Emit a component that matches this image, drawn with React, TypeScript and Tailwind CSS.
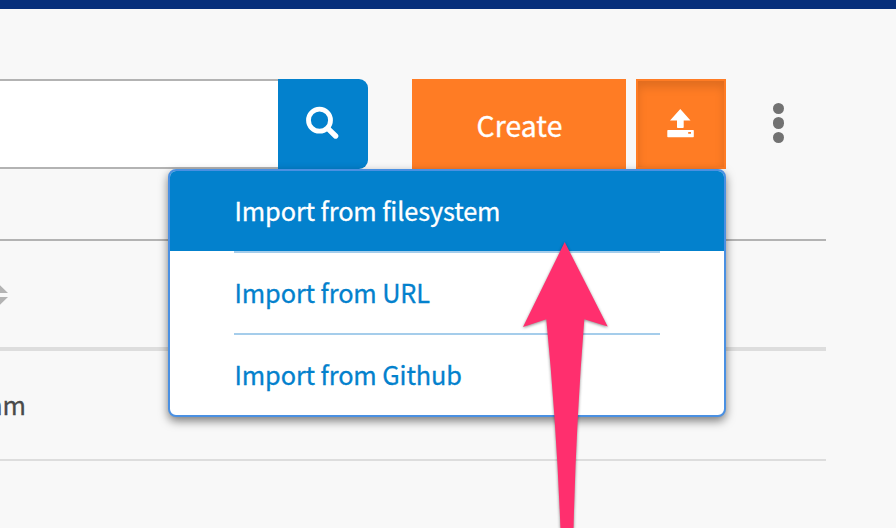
const MENU_ITEMS = ['Import from filesystem', 'Import from URL', 'Import from Github'];

function SearchIcon() {
  return (
    <svg width="34" height="34" viewBox="305 105 34 34" fill="none" stroke="#fff">
      <circle cx="319.5" cy="120.2" r="11" strokeWidth="4.8" />
      <path d="M328 128.6L335.6 136" strokeWidth="5.4" strokeLinecap="round" />
    </svg>
  );
}

function UploadIcon() {
  return (
    <svg width="28" height="30" viewBox="667 108 28 30" fill="#fff">
      <path d="M680.3 109L690.5 120.5H683.7V127.2Q683.7 128 682.9 128H677.8Q677 128 677 127.2V120.5H670Z" />
      <path
        fillRule="evenodd"
        d="M668 130H693.2Q693.8 130 693.8 130.6V136.6Q693.8 137.2 693.2 137.2H668Q667.3 137.2 667.3 136.6V130.6Q667.3 130 668 130ZM688.2 132.1V133.7H691V132.1Z"
      />
    </svg>
  );
}

function ImportMenu() {
  return (
    <div className="absolute left-[168px] top-[169px] z-10 h-[248px] w-[558px] rounded-[8px] border-2 border-[#4a90e2] bg-white shadow-[0_4px_10px_rgba(0,0,0,0.5)]">
      <ul className="flex flex-col text-[25.3px] leading-[78px] tracking-[-0.11px] text-[#0381cd] [-webkit-text-stroke:0.3px_currentColor]">
        {MENU_ITEMS.map((label, i) => (
          <li key={label}>
            <a className={`block h-20 pl-[64.5px] ${i === 0 ? 'rounded-t-[6px] bg-[#0381cd] text-white' : ''}`}>
              {label}
            </a>
            {i < MENU_ITEMS.length - 1 && <div className="mx-16 h-0.5 bg-[#a5cdeb]" />}
          </li>
        ))}
      </ul>
    </div>
  );
}

function PointerArrow() {
  return (
    <svg
      className="absolute left-[510px] top-[230px] z-20 drop-shadow-[0_1px_1.5px_rgba(0,0,0,0.45)]"
      width="110"
      height="298"
      viewBox="510 230 110 298"
    >
      <path
        fill="#ff2f6e"
        d="M564.7 242L607.7 326.5L584.3 319.3Q576 424 573.5 530H560.5Q556.5 424 546.3 319.3L523 327Z"
      />
    </svg>
  );
}

export default function App() {
  return (
    <div className="relative h-[528px] w-[896px] overflow-hidden bg-[#f8f8f8] font-['Noto_Sans_CJK_SC','Open_Sans',sans-serif]">
      <div className="h-[9px] bg-[#072f7b]" />
      <div className="mt-[70px] flex h-[90px]">
        <div className="w-[278px] border-y-2 border-[#b3b3b3] bg-white" />
        <button className="flex w-[90px] items-center justify-center rounded-r-[9px] bg-[#0381cd] pr-[2px] pb-1">
          <SearchIcon />
        </button>
        <button className="ml-11 w-[214px] bg-[#ff7c24] pt-0.5 pl-px text-[28.3px] tracking-[0.1px] text-white [-webkit-text-stroke:0.35px_currentColor]">
          Create
        </button>
        <button className="ml-2.5 flex w-[90px] items-center justify-center border-2 border-[#ff7c24] bg-[#ff7c24] pb-[2px] shadow-[inset_0_6px_10px_rgba(0,0,0,0.125)]">
          <UploadIcon />
        </button>
        <button className="ml-[47.3px] flex flex-col items-center justify-center gap-[3.6px] pb-[2px]">
          <span className="size-[11.2px] rounded-full bg-[#727272]" />
          <span className="size-[11.2px] rounded-full bg-[#727272]" />
          <span className="size-[11.2px] rounded-full bg-[#727272]" />
        </button>
      </div>
      <div className="mt-[70px] w-[826px] border-t-2 border-[#b3b3b3]">
        <div className="flex h-[110px] items-center border-b-4 border-[#dddddd] pt-0.5">
          <svg width="8" height="22" viewBox="0 0 8 22" fill="#b3b3b3">
            <path d="M0 1.2L8 9H0ZM0 13H8L0 20.8Z" />
          </svg>
        </div>
        <div className="flex h-[110px] items-center border-b-2 border-[#dddddd]">
          <div className="flex w-[26px] justify-end overflow-hidden text-[25.3px] text-[#4a4a4a] [-webkit-text-stroke:0.3px_currentColor]">
            <span>am</span>
          </div>
        </div>
      </div>
      <ImportMenu />
      <PointerArrow />
    </div>
  );
}
